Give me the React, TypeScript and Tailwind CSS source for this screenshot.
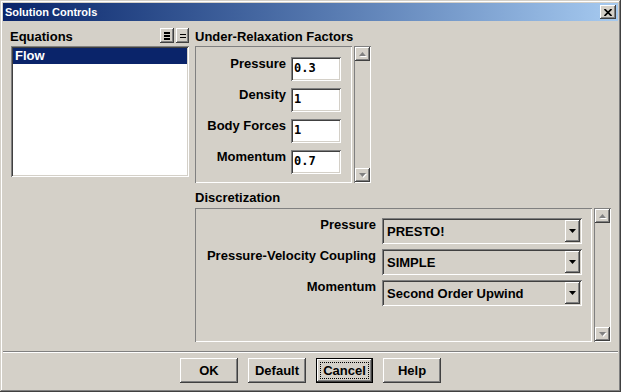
import React from "react";

// Win2000 style bevels
const raised =
  "shadow-[inset_-1px_-1px_#404040,inset_1px_1px_#ffffff,inset_-2px_-2px_#808080,inset_2px_2px_#d4d0c8]";
const sunken =
  "shadow-[inset_1px_1px_#808080,inset_-1px_-1px_#ffffff,inset_2px_2px_#404040,inset_-2px_-2px_#d4d0c8]";
const groove = "shadow-[inset_1px_1px_#808080,inset_-1px_-1px_#ffffff]";
const frame =
  "shadow-[inset_-1px_-1px_#404040,inset_1px_1px_#d4d0c8,inset_-2px_-2px_#808080,inset_2px_2px_#ffffff]";

const factors = [
  ["Pressure", "0.3"],
  ["Density", "1"],
  ["Body Forces", "1"],
  ["Momentum", "0.7"],
];

const schemes = [
  ["Pressure", "PRESTO!"],
  ["Pressure-Velocity Coupling", "SIMPLE"],
  ["Momentum", "Second Order Upwind"],
];

const GreyArrow = ({ up }: { up: boolean }) => (
  <svg width="8" height="5" viewBox="0 0 8 5">
    <polygon
      points={up ? "4.5,1 8,5 1,5" : "1,1 8,1 4.5,5"}
      fill="#ffffff"
    />
    <polygon points={up ? "3.5,0 7,4 0,4" : "0,0 7,0 3.5,4"} fill="#808080" />
  </svg>
);

const ScrollBar = () => (
  <div className={`flex w-[17px] flex-col justify-between p-[1px] ${groove}`}>
    <div className={`flex h-[14px] items-center justify-center ${raised}`}>
      <GreyArrow up />
    </div>
    <div className={`flex h-[14px] items-center justify-center ${raised}`}>
      <GreyArrow up={false} />
    </div>
  </div>
);

const Dropdown = ({ value }: { value: string }) => (
  <div
    className={`flex h-[26px] w-[200px] items-center pl-[5px] pr-[2px] ${sunken}`}
  >
    <span className="flex-1 text-[13px] font-bold leading-[15px]">{value}</span>
    <div className={`flex h-[22px] w-[15px] items-center justify-center ${raised}`}>
      <svg width="7" height="4" viewBox="0 0 7 4">
        <polygon points="0,0 7,0 3.5,4" fill="#000000" />
      </svg>
    </div>
  </div>
);

const DialogButton = ({ label, focused }: { label: string; focused?: boolean }) => (
  <div
    className={`relative flex h-[25px] items-center justify-center text-[13px] font-bold ${
      focused ? "w-[57px] border border-black" : "w-[58px]"
    }`}
  >
    <div className={`absolute inset-0 ${raised}`} />
    {focused && (
      <div className="absolute inset-[3px] border border-dotted border-black" />
    )}
    <span className="relative">{label}</span>
  </div>
);

export default function App() {
  return (
    <div
      className={`flex h-[392px] w-[621px] flex-col bg-[#d4d0c8] p-[3px] text-black font-['Liberation_Sans',Arial,sans-serif] ${frame}`}
    >
      {/* title bar */}
      <div className="flex h-[18px] items-center bg-linear-to-r from-[#0a246a] to-[#a6caf0] pl-[2px] pr-[2px]">
        <span className="flex-1 text-[11px] font-bold text-white">Solution Controls</span>
        <div className={`flex h-[14px] w-[16px] items-center justify-center bg-[#d4d0c8] ${raised}`}>
          <svg width="8" height="7" viewBox="0 0 8 7">
            <path d="M0.5 0 L7.5 7 M7.5 0 L0.5 7" stroke="#000" strokeWidth="1.7" />
          </svg>
        </div>
      </div>

      <div className="flex px-[7px]">
        {/* equations */}
        <div className="flex w-[180px] flex-col pt-[7px]">
          <div className="flex h-[18px] items-start">
            <span className="mt-[1px] flex-1 text-[13px] font-bold leading-[15px]">Equations</span>
            <div className={`flex h-[15px] w-[14px] items-center justify-center ${raised}`}>
              <svg width="6" height="8" viewBox="0 0 6 8">
                <rect x="0" y="0" width="6" height="2" fill="#000" />
                <rect x="0" y="3" width="6" height="2" fill="#000" />
                <rect x="0" y="6" width="6" height="2" fill="#000" />
              </svg>
            </div>
            <div className={`ml-[2px] flex h-[15px] w-[13px] items-center justify-center ${raised}`}>
              <svg width="6" height="4" viewBox="0 0 6 4">
                <rect x="0" y="0" width="6" height="1" fill="#000" />
                <rect x="0" y="3" width="6" height="1" fill="#000" />
              </svg>
            </div>
          </div>
          <div className={`ml-[1px] h-[131px] w-[178px] bg-white p-[2px] ${sunken}`}>
            <div className="flex h-[16px] items-center bg-[#0a246a] pl-[2px] text-[13px] font-bold text-white">
              Flow
            </div>
          </div>
        </div>

        {/* right side */}
        <div className="ml-[6px] flex flex-col pt-[8px]">
          <div className="h-[17px] text-[13px] font-bold leading-[15px]">Under-Relaxation Factors</div>
          <div className="flex h-[137px] gap-[2px]">
            <div className={`flex w-[157px] flex-col gap-[7px] pl-[5px] pt-[11px] ${groove}`}>
              {factors.map(([label, value]) => (
                <div key={label} className="flex items-start gap-[5px]">
                  <div className="-mt-[1px] w-[86px] text-right text-[13px] font-bold leading-[15px]">
                    {label}
                  </div>
                  <div
                    className={`h-[24px] w-[50px] bg-white pl-[3px] pt-[4px] font-['DejaVu_Sans_Mono',monospace] text-[12px] font-bold leading-[14px] ${sunken}`}
                  >
                    {value}
                  </div>
                </div>
              ))}
            </div>
            <ScrollBar />
          </div>

          <div className="mt-[7px] h-[18px] text-[13px] font-bold leading-[15px]">Discretization</div>
          <div className="flex h-[134px] gap-[2px]">
            <div className={`flex w-[397px] flex-col gap-[5px] pl-[3px] pt-[10px] ${groove}`}>
              {schemes.map(([label, value]) => (
                <div key={label} className="flex items-start gap-[6px]">
                  <div className="-mt-[1px] w-[178px] text-right text-[13px] font-bold leading-[15px]">
                    {label}
                  </div>
                  <Dropdown value={value} />
                </div>
              ))}
            </div>
            <ScrollBar />
          </div>
        </div>
      </div>

      {/* separator + buttons */}
      <div className="mt-[9px] h-[2px] border-t border-b border-t-[#808080] border-b-white" />
      <div className="mt-[5px] flex justify-center gap-[10px]">
        <DialogButton label="OK" />
        <DialogButton label="Default" />
        <DialogButton label="Cancel" focused />
        <DialogButton label="Help" />
      </div>
    </div>
  );
}
